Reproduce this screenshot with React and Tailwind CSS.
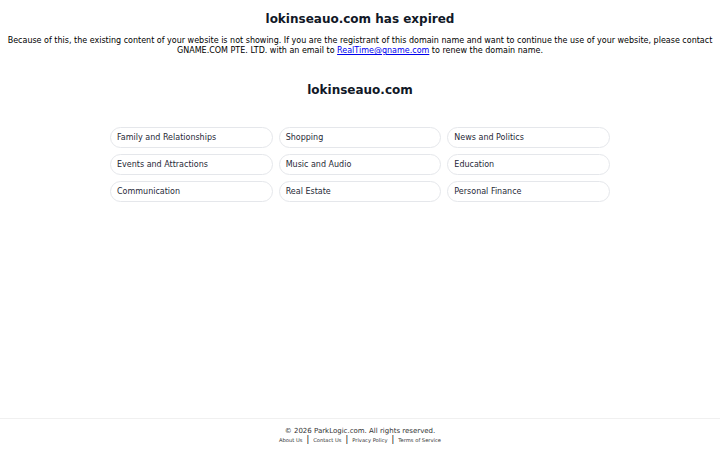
const topics = [
  "Family and Relationships",
  "Shopping",
  "News and Politics",
  "Events and Attractions",
  "Music and Audio",
  "Education",
  "Communication",
  "Real Estate",
  "Personal Finance",
];

const links = ["About Us", "Contact Us", "Privacy Policy", "Terms of Service"];

export default function App() {
  return (
    <div className="min-h-screen flex flex-col bg-white text-[#111827] font-['DejaVu_Sans',sans-serif]">
      <main className="flex-1 flex flex-col items-center px-[4px]">
        <h1 className="mt-[10px] text-[12px] font-bold leading-[18px]">lokinseauo.com has expired</h1>
        <p className="mt-[8px] text-center text-[8px] leading-[10px] text-black">
          Because of this, the existing content of your website is not showing. If you are the registrant of this domain name and want to continue the use of your website, please contact GNAME.COM PTE. LTD. with an email to{" "}
          <a href="#" className="text-[#0000ee] underline">RealTime@gname.com</a> to renew the domain name.
        </p>

        <h2 className="mt-[25px] text-[12px] font-bold leading-[18px]">lokinseauo.com</h2>

        <div className="mt-[28px] w-[500px] grid grid-cols-3 gap-x-[6px] gap-y-[6px]">
          {topics.map((t) => (
            <a
              key={t}
              href="#"
              className="h-[21px] flex items-center px-[6px] rounded-full border border-[#e5e7eb] text-[8px] text-[#1f2937]"
            >
              {t}
            </a>
          ))}
        </div>
      </main>

      <footer className="border-t border-[#f0f0f0] pt-[7px] pb-[6px] flex flex-col items-center">
        <p className="text-[7px] leading-[10px] text-[#333]">© 2026 ParkLogic.com. All rights reserved.</p>
        <div className="flex items-center text-[5.2px] leading-[8px] text-[#333]">
          {links.map((l, i) => (
            <span key={l} className="flex items-center">
              {i > 0 && <span className="mx-[4px] text-[8px] text-black">|</span>}
              <a href="#">{l}</a>
            </span>
          ))}
        </div>
      </footer>
    </div>
  );
}
